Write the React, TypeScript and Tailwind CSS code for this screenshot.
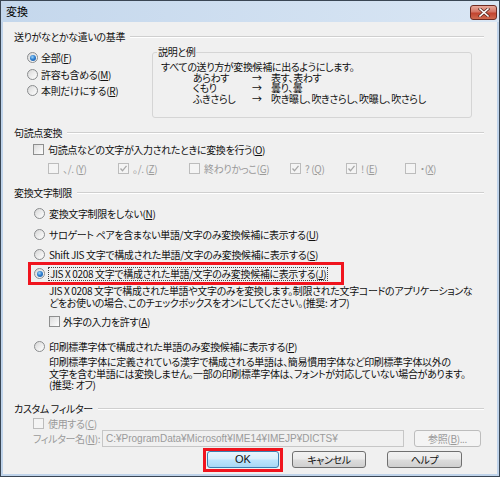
import React from 'react';

const K = ({ k }: { k: string }) => <u className="underline-offset-[1px]">{k}</u>;

const Radio = ({ checked = false }: { checked?: boolean }) => (
  <span className="w-[11px] h-[11px] shrink-0 rounded-full border border-[#8a8c8e] bg-gradient-to-br from-[#d6d6d6] via-[#ececec] to-white flex items-center justify-center">
    {checked && (
      <span className="w-[6px] h-[6px] rounded-full bg-[radial-gradient(circle_at_40%_35%,#9fd6f8_0%,#2f7fd0_45%,#15509a_100%)]" />
    )}
  </span>
);

const Check = ({ checked = false, disabled = false }: { checked?: boolean; disabled?: boolean }) => (
  <span
    className={
      disabled
        ? 'w-[11px] h-[11px] shrink-0 border border-[#bcbcbc] bg-[#f4f4f4] flex items-center justify-center'
        : 'w-[11px] h-[11px] shrink-0 border border-[#8e8f8f] bg-gradient-to-br from-[#dcdcdc] to-white flex items-center justify-center'
    }
  >
    {checked && (
      <svg width="9" height="9" viewBox="0 0 9 9">
        <path d="M1.5 4.5 L3.5 6.8 L7.5 1.8" fill="none" stroke={disabled ? '#a8a8a8' : '#333'} strokeWidth="1.3" />
      </svg>
    )}
  </span>
);

const Header = ({ label, mt }: { label: string; mt: string }) => (
  <div className={`flex items-center h-[12px] pl-[11px] pr-[13px] ${mt}`}>
    <span className="leading-[12px] whitespace-nowrap">{label}</span>
    <span className="flex-1 ml-[5px] border-t border-[#cfcfcf] border-b border-b-white" />
  </div>
);

const Btn = ({ children, w }: { children: React.ReactNode; w: string }) => (
  <div className={`${w} h-[17px] rounded-[3px] border border-[#707070] bg-[linear-gradient(#f2f2f2_0%,#ebebeb_48%,#dddddd_52%,#cfcfcf_100%)] flex items-center justify-center leading-none`}>
    {children}
  </div>
);

export default function App() {
  return (
    <div className="w-[500px] h-[477px] border border-[#3a4654] bg-[#f0f0f0] flex flex-col font-['Noto_Sans_CJK_JP',sans-serif] [font-feature-settings:'palt'] text-[10px] tracking-[-0.35px] text-[#111] overflow-hidden whitespace-nowrap">
      {/* Title bar */}
      <div className="h-[21px] shrink-0 flex items-start justify-between bg-gradient-to-r from-[#c4d7ec] to-[#d9e6f4]">
        <span className="pl-[5px] pt-[4px] text-[11px] leading-[13px] tracking-normal text-black">変換</span>
        <div className="mt-[4px] mr-[2px] w-[27px] h-[15px] rounded-[3px] border border-[#6e2b22] bg-[linear-gradient(#e9a99b_0%,#d47565_45%,#c2442f_55%,#cf6a4f_100%)] flex items-center justify-center">
          <svg width="12" height="9" viewBox="0 0 12 9">
            <path d="M2 1 L10 8 M10 1 L2 8" stroke="#5a2a22" strokeWidth="3" strokeLinecap="square" />
            <path d="M2 1 L10 8 M10 1 L2 8" stroke="#ffffff" strokeWidth="1.6" strokeLinecap="square" />
          </svg>
        </div>
      </div>

      {/* Client */}
      <div className="flex-1 flex flex-col border-x-2 border-b-2 border-[#bfd3ea]">
        <Header label="送りがなとかな遣いの基準" mt="mt-[9px]" />

        <div className="flex">
          <div className="w-[149px] flex flex-col pl-[24px] pt-[6px]">
            <div className="h-[17px] flex items-center gap-[3px]">
              <Radio checked />
              <span>全部(<K k="F" />)</span>
            </div>
            <div className="h-[16px] flex items-center gap-[3px]">
              <Radio />
              <span>許容も含める(<K k="M" />)</span>
            </div>
            <div className="h-[16px] flex items-center gap-[3px]">
              <Radio />
              <span>本則だけにする(<K k="R" />)</span>
            </div>
          </div>
          <fieldset className="mt-[3px] w-[320px] h-[72px] border border-[#d5d5d5] rounded-[3px] pl-[8px] pt-[4px]">
            <legend className="px-[1px] -ml-[4px] leading-[12px]">説明と例</legend>
            <div className="leading-[10.5px]">すべての送り方が変換候補に出るようにします。</div>
            <div className="grid grid-cols-[32px_59px_19px_1fr] leading-[10.5px]">
              <span />
              <span>あらわす</span>
              <span>→</span>
              <span>表す、表わす</span>
              <span />
              <span>くもり</span>
              <span>→</span>
              <span>曇り、曇</span>
              <span />
              <span>ふきさらし</span>
              <span>→</span>
              <span>吹き曝し、吹きさらし、吹曝し、吹さらし</span>
            </div>
          </fieldset>
        </div>

        <Header label="句読点変換" mt="mt-[9px]" />
        <div className="mt-[2px] h-[16px] flex items-center gap-[4px] pl-[30px]">
          <Check />
          <span>句読点などの文字が入力されたときに変換を行う(<K k="O" />)</span>
        </div>
        <div className="mt-[3px] h-[16px] flex items-center pl-[45px] text-[#9a9a9a]">
          <div className="w-[70px] flex items-center gap-[4px]"><Check disabled /><span>、/. (<K k="Y" />)</span></div>
          <div className="w-[71px] flex items-center gap-[4px]"><Check checked disabled /><span>。/. (<K k="Z" />)</span></div>
          <div className="w-[101px] flex items-center gap-[4px]"><Check disabled /><span>終わりかっこ(<K k="G" />)</span></div>
          <div className="w-[56px] flex items-center gap-[4px]"><Check checked disabled /><span>? (<K k="Q" />)</span></div>
          <div className="w-[59px] flex items-center gap-[4px]"><Check checked disabled /><span>! (<K k="E" />)</span></div>
          <div className="flex items-center gap-[4px]"><Check disabled /><span>・(<K k="X" />)</span></div>
        </div>

        <Header label="変換文字制限" mt="mt-[11px]" />
        <div className="mt-[6px] h-[16px] flex items-center gap-[4px] pl-[31px]">
          <Radio />
          <span>変換文字制限をしない(<K k="N" />)</span>
        </div>
        <div className="mt-[5px] h-[16px] flex items-center gap-[4px] pl-[31px]">
          <Radio />
          <span>サロゲート ペアを含まない単語/文字のみ変換候補に表示する(<K k="U" />)</span>
        </div>
        <div className="mt-[4px] h-[16px] flex items-center gap-[4px] pl-[31px]">
          <Radio />
          <span>Shift JIS 文字で構成された単語/文字のみ変換候補に表示する(<K k="S" />)</span>
        </div>
        <div className="ml-[25px] w-[316px] h-[23px] border-[3px] border-[#f0141e] flex items-center gap-[3px] pl-[3px]">
          <Radio checked />
          <span className="border border-dotted border-[#444] px-[1px] leading-[12px]">
            JIS X 0208 文字で構成された単語/文字のみ変換候補に表示する(<K k="J" />)
          </span>
        </div>
        <div className="pl-[46px] leading-[12px]">
          <div>JIS X 0208 文字で構成された単語や文字のみを変換します。制限された文字コードのアプリケーションな</div>
          <div>どをお使いの場合、このチェックボックスをオンにしてください。(推奨: オフ)</div>
        </div>
        <div className="mt-[4px] h-[16px] flex items-center gap-[3px] pl-[46px]">
          <Check />
          <span>外字の入力を許す(<K k="A" />)</span>
        </div>
        <div className="mt-[9px] h-[16px] flex items-center gap-[4px] pl-[31px]">
          <Radio />
          <span>印刷標準字体で構成された単語のみ変換候補に表示する(<K k="P" />)</span>
        </div>
        <div className="mt-[2px] pl-[46px] leading-[11.5px]">
          <div>印刷標準字体に定義されている漢字で構成される単語は、簡易慣用字体など印刷標準字体以外の</div>
          <div>文字を含む単語には変換しません。一部の印刷標準字体は、フォントが対応していない場合があります。</div>
          <div>(推奨: オフ)</div>
        </div>

        <Header label="カスタム フィルター" mt="mt-[12px]" />
        <div className="mt-[2px] h-[13px] flex items-center gap-[4px] pl-[30px] text-[#9a9a9a]">
          <Check disabled />
          <span>使用する(<K k="C" />)</span>
        </div>
        <div className="h-[17px] flex items-center pl-[30px] text-[#9a9a9a]">
          <span className="w-[69px] shrink-0">フィルター名(<K k="N" />):</span>
          <div className="w-[302px] h-[17px] shrink-0 border border-[#c6c6c6] bg-[#f0f0f0] flex items-center pl-[3px] font-['Liberation_Sans','Noto_Sans_CJK_JP',sans-serif] text-[10px] tracking-normal">
            C:¥ProgramData¥Microsoft¥IME14¥IMEJP¥DICTS¥
          </div>
          <div className="ml-[10px] w-[67px] h-[17px] shrink-0 rounded-[3px] border border-[#bdbdbd] bg-[#f4f4f4] flex items-center justify-center">
            参照(<K k="B" />)...
          </div>
        </div>

        <div className="mt-[1px] h-[24px] flex items-center pl-[200px]">
          <div className="w-[80px] h-[24px] border-[3px] border-[#f0141e] flex items-center justify-center">
            <div className="w-[72px] h-[17px] rounded-[3px] border border-[#3c7fb1] bg-[linear-gradient(#e9f5fd_0%,#d9effc_48%,#bde5fc_52%,#a8d8f4_100%)] flex items-center justify-center font-['Liberation_Sans',sans-serif] text-[11px] tracking-normal leading-none">
              OK
            </div>
          </div>
          <div className="ml-[9px]">
            <Btn w="w-[74px]">キャンセル</Btn>
          </div>
          <div className="ml-[21px]">
            <Btn w="w-[75px]">ヘルプ</Btn>
          </div>
        </div>
      </div>
    </div>
  );
}
